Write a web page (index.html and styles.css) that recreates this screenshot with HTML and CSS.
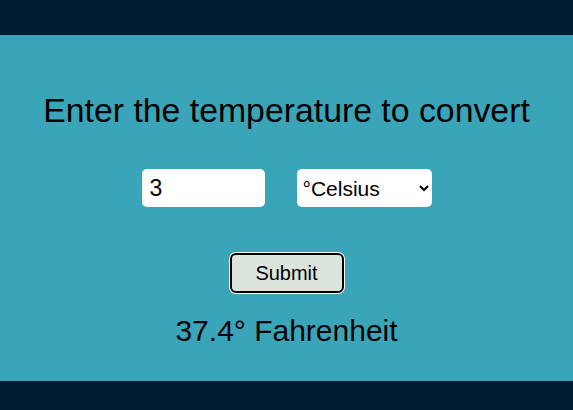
FILE: index.html
```html
<!DOCTYPE html>
<html>
<head>
<meta charset="utf-8">
<link rel="stylesheet" href="styles.css">
</head>
<body>
<header class="bar top"></header>
<main class="panel">
  <h1 class="title">Enter the temperature to convert</h1>
  <div class="row">
    <input class="field" type="text" value="3">
    <select class="unit">
      <option>°Celsius</option>
      <option>°Fahrenheit</option>
    </select>
  </div>
  <button class="submit">Submit</button>
  <p class="result">37.4° Fahrenheit</p>
</main>
<footer class="bar bottom"></footer>
</body>
</html>
```
FILE: styles.css
```css
* { box-sizing: border-box; }
html, body { margin: 0; padding: 0; }
body {
  font-family: "Liberation Sans", Arial, sans-serif;
  background: #3aa5b9;
  width: 573px;
  height: 410px;
  display: flex;
  flex-direction: column;
}
.bar { background: #011c31; flex: none; }
.top { height: 35px; }
.bottom { height: 29px; }
.panel {
  flex: 1;
  display: flex;
  flex-direction: column;
  align-items: center;
}
.title {
  margin: 55px 0 0;
  font-size: 33.8px;
  font-weight: normal;
  line-height: 40px;
  color: #000;
}
.row {
  margin-top: 39px;
  display: flex;
  gap: 32px;
}
.field, .unit {
  height: 38px;
  border: none;
  border-radius: 5px;
  background: #fff;
  font-family: "Liberation Sans", Arial, sans-serif;
  color: #000;
}
.field { width: 123px; padding: 0 8px; outline: none; font-size: 23px; }
.unit { width: 135px; padding: 0 2px; font-size: 21px; }
.submit {
  margin-top: 46px;
  width: 114px;
  height: 40px;
  background: #dce5dc;
  border: 2px solid #000;
  border-radius: 6px;
  box-shadow: 0 0 0 1px #fff;
  font-family: "Liberation Sans", Arial, sans-serif;
  font-size: 20px;
  color: #000;
}
.result {
  margin: 20px 0 0;
  font-size: 30px;
  line-height: 36px;
  color: #000;
}
```
